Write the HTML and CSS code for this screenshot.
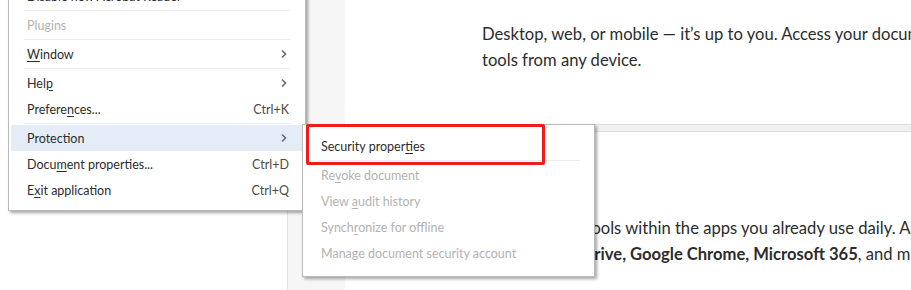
FILE: index.html
```html
<!DOCTYPE html>
<html lang="en">
<head>
  <meta charset="UTF-8" />
  <meta name="viewport" content="width=device-width, initial-scale=1.0" />
  <title>Acrobat - Menu</title>
  <link rel="stylesheet" href="styles.css">
</head>
<body>
  <div class="page">
    <aside class="sidebar"></aside>
    <div class="gutter"></div>
    <main class="content">
      <section class="block first">
        <p>Desktop, web, or mobile — it’s up to you. Access your documents and PDF<br>tools from any device.</p>
      </section>
      <div class="band"></div>
      <section class="block second">
        <p>Use Acrobat’s tools within the apps you already use daily. Access Acrobat in<br><b>Miro, Google Drive, Google Chrome, Microsoft 365</b>, and more.</p>
      </section>
    </main>
  </div>

  <!-- main menu -->
  <ul class="menu main-menu">
    <li class="item">Disable new Acrobat Reader</li>
    <li class="sep"></li>
    <li class="item disabled">Plugins</li>
    <li class="sep"></li>
    <li class="item"><span><u>W</u>indow</span><svg class="chev" width="6" height="10" viewBox="0 0 6 10"><path d="M1 1.5 L4.5 5 L1 8.5" fill="none" stroke="#6b6b6b" stroke-width="1.6"/></svg></li>
    <li class="sep"></li>
    <li class="item"><span>Hel<u>p</u></span><svg class="chev" width="6" height="10" viewBox="0 0 6 10"><path d="M1 1.5 L4.5 5 L1 8.5" fill="none" stroke="#6b6b6b" stroke-width="1.6"/></svg></li>
    <li class="item"><span>Prefere<u>n</u>ces...</span><span class="key">Ctrl+K</span></li>
    <li class="sep"></li>
    <li class="item active"><span>Protection</span><svg class="chev" width="6" height="10" viewBox="0 0 6 10"><path d="M1 1.5 L4.5 5 L1 8.5" fill="none" stroke="#6b6b6b" stroke-width="1.6"/></svg></li>
    <li class="item"><span>Docu<u>m</u>ent properties...</span><span class="key">Ctrl+D</span></li>
    <li class="item"><span>E<u>x</u>it application</span><span class="key">Ctrl+Q</span></li>
  </ul>

  <!-- protection submenu -->
  <ul class="menu sub-menu">
    <li class="item"><span>Security proper<u>t</u>ies</span></li>
    <li class="sep"></li>
    <li class="item disabled"><span>Re<u>v</u>oke document</span></li>
    <li class="item disabled"><span>View <u>a</u>udit history</span></li>
    <li class="item disabled"><span>Synch<u>r</u>onize for offline</span></li>
    <li class="item disabled"><span>Manage document security account</span></li>
  </ul>

  <div class="callout"></div>
</body>
</html>
```

FILE: styles.css
```css
body {
  margin: 0;
  padding: 0;
  width: 911px;
  height: 290px;
  overflow: hidden;
  position: relative;
  font-family: Lato, "Open Sans", sans-serif;
  color: #2c2c2c;
  background-color: #fff;
}
.page {
  display: flex;
  height: 290px;
}
.sidebar {
  width: 287px;
  flex-shrink: 0;
  border-right: 1px solid #e2e2e2;
  background-color: #fff;
}
.gutter {
  width: 57px;
  flex-shrink: 0;
  background-color: #f6f6f6;
}
.content {
  flex: 1;
  min-width: 0;
  background-color: #fff;
}
.block p {
  margin: 0;
  padding-left: 137px;
  font-size: 16.6px;
  line-height: 26px;
  white-space: nowrap;
}
.block b {
  font-weight: 700;
}
.first {
  padding-top: 21px;
  height: 103px;
}
.band {
  height: 6px;
  border-top: 1px solid #dedede;
  border-bottom: 1px solid #dedede;
  background-color: #f2f2f2;
}
.second {
  padding-top: 83px;
}

/* Menus */
.menu {
  position: absolute;
  margin: 0;
  list-style: none;
  background-color: #fff;
  border: 1px solid #b9b9b9;
  box-shadow: 2px 2px 3px rgba(0, 0, 0, 0.35);
  font-size: 12.5px;
}
.main-menu {
  left: 8px;
  top: -24px;
  width: 292px;
  padding: 6px 2px 7px;
}
.sub-menu {
  left: 302px;
  top: 124px;
  width: 287px;
  padding: 8px 2px 10px;
}
.item {
  display: flex;
  align-items: center;
  justify-content: space-between;
  height: 26px;
  padding: 0 14px 0 16px;
}
.item u {
  text-underline-offset: 2px;
}
.item.disabled {
  color: #b2b2b2;
}
.item.active {
  background-color: #e4edf7;
}
.chev {
  margin-right: 2px;
}
.key {
  color: #4b4b4b;
}
.sep {
  height: 1px;
  margin: 1px 13px;
  background-color: #ececec;
}
.sub-menu .sep {
  margin: 1px 12px 1px 13px;
}

/* red highlight box over the first submenu item */
.callout {
  position: absolute;
  left: 306px;
  top: 124px;
  width: 233px;
  height: 35px;
  border: 3px solid #f01c1c;
  border-radius: 2px;
}
```
